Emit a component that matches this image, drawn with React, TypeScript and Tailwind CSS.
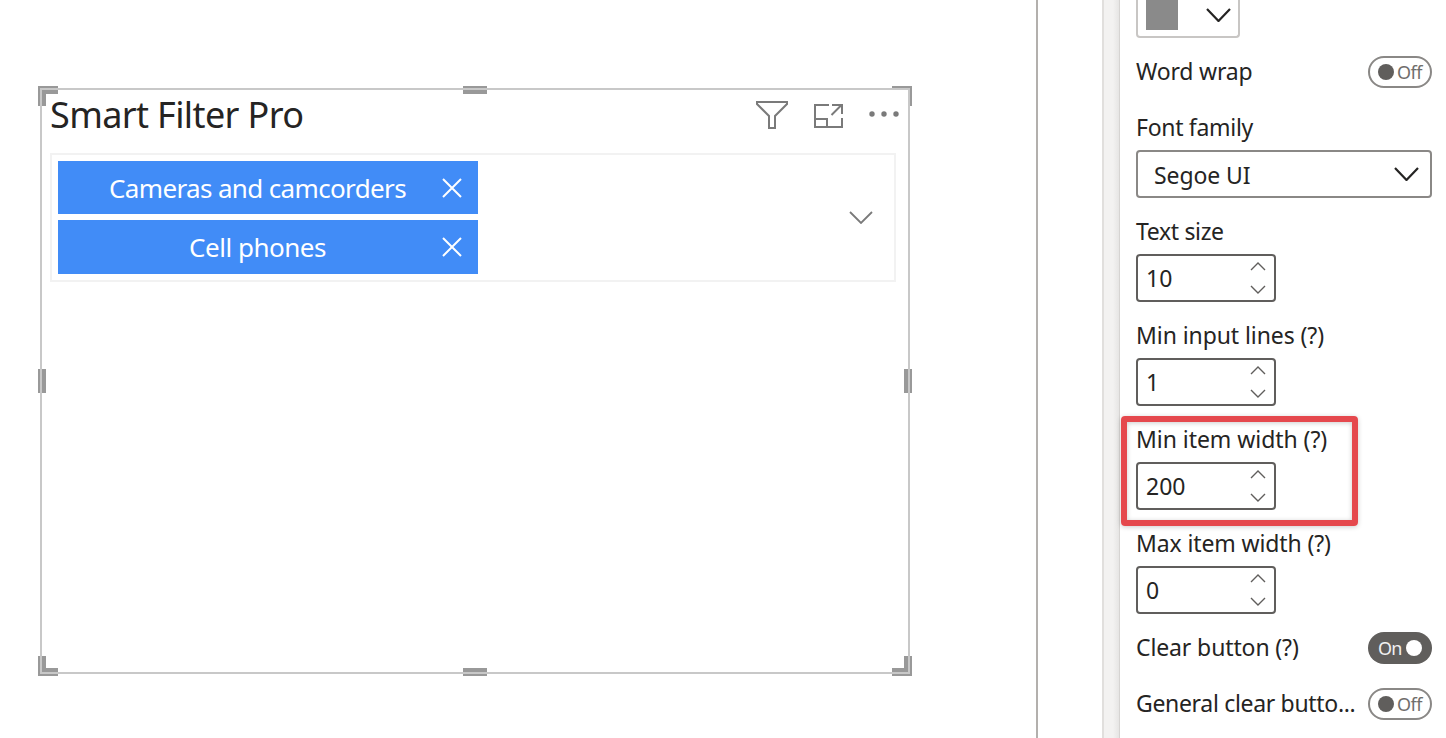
import React from "react";

function Chevron({ className, up = false, w, h, stroke }: { className?: string; up?: boolean; w: number; h: number; stroke: number }) {
  const d = up ? `M1 ${h - 1}L${w / 2} 1L${w - 1} ${h - 1}` : `M1 1L${w / 2} ${h - 1}L${w - 1} 1`;
  return (
    <svg className={className} width={w} height={h} viewBox={`0 0 ${w} ${h}`} fill="none" stroke="currentColor" strokeWidth={stroke}>
      <path d={d} />
    </svg>
  );
}

function Handle({ className }: { className: string }) {
  return <span className={`absolute bg-[#999999] ${className}`} />;
}

function Chip({ label, className }: { label: string; className: string }) {
  return (
    <div className={`flex w-[420px] items-center bg-[#418cf7] pr-4 text-white ${className}`}>
      <span className="flex-1 pl-[15px] text-center text-[26px] leading-8 whitespace-nowrap">{label}</span>
      <svg width="20" height="20" viewBox="0 0 20 20" fill="none" stroke="currentColor" strokeWidth="2">
        <path d="M1 1L19 19M19 1L1 19" />
      </svg>
    </div>
  );
}

function Toggle({ on = false }: { on?: boolean }) {
  return on ? (
    <div className="flex h-8 w-16 shrink-0 items-center justify-between rounded-full bg-[#605e5c] pr-[10px] pl-[10px] text-[18px] leading-8 text-[#f0f0f0]">
      <span className="tracking-[-0.7px]">On</span>
      <span className="size-4 rounded-full bg-white" />
    </div>
  ) : (
    <div className="flex h-8 w-16 shrink-0 items-center justify-between rounded-full border-2 border-[#8a8886] pr-2 pl-2 text-[18px] leading-7 text-[#706e6c]">
      <span className="size-4 rounded-full bg-[#605e5c]" />
      <span className="tracking-[-0.5px]">Off</span>
    </div>
  );
}

function Label({ children, className = "" }: { children: React.ReactNode; className?: string }) {
  return <div className={`h-8 text-[23px] leading-[30px] whitespace-nowrap ${className}`}>{children}</div>;
}

function NumberField({ label, value, track }: { label: string; value: string; track: string }) {
  return (
    <div className="mb-[18px]">
      <Label className={track}>{label}</Label>
      <div className="mt-1.5 flex h-12 w-[140px] items-center justify-between rounded-[4px] border-2 border-[#605e5c] bg-white pr-2 pl-2">
        <span className="text-[23px] leading-8">{value}</span>
        <span className="flex flex-col gap-3.5 text-[#605e5c]">
          <Chevron up w={16} h={9} stroke={1.4} />
          <Chevron w={16} h={9} stroke={1.4} />
        </span>
      </div>
    </div>
  );
}

export default function App() {
  return (
    <div className="flex h-[738px] w-[1446px] overflow-hidden bg-white font-['Noto_Sans',sans-serif] text-[#252423]">
      <main className="w-[1038px] shrink-0 border-r-2 border-[#b3b0ad] pt-[88px] pl-10">
        <section className="relative h-[586px] w-[870px]">
          <Handle className="-top-0.5 -left-0.5 h-2 w-5" />
          <Handle className="-top-0.5 -left-0.5 h-5 w-2" />
          <Handle className="-top-0.5 left-[423px] h-2 w-6" />
          <Handle className="-top-0.5 -right-0.5 h-0.5 w-5" />
          <Handle className="-top-0.5 -right-0.5 h-5 w-0.5" />
          <Handle className="top-[281px] -left-0.5 h-6 w-2" />
          <Handle className="top-[281px] -right-0.5 h-6 w-2" />
          <Handle className="-bottom-0.5 -left-0.5 h-2 w-5" />
          <Handle className="-bottom-0.5 -left-0.5 h-5 w-2" />
          <Handle className="-bottom-0.5 left-[423px] h-2 w-6" />
          <Handle className="-right-0.5 -bottom-0.5 h-2 w-5" />
          <Handle className="-right-0.5 -bottom-0.5 h-5 w-2" />
          <div className="relative h-full border-2 border-[#c8c8c8]">
            <header className="flex h-[63px] items-start pr-2 pl-2">
              <h1 className="flex-1 text-[36px] leading-[50px] tracking-[-0.62px] whitespace-nowrap">Smart Filter Pro</h1>
              <svg className="mt-[11px]" width="144" height="30" viewBox="0 0 144 30" fill="none" stroke="#7a7a7a" strokeWidth="2">
                <path d="M1 1H31V3L19 15V27H13V15L1 3Z" />
                <path d="M73 4H59V26H86V17M59 18H71V26M76 4H86V13M75.500 14L85.500 4" />
                <g fill="#7a7a7a" stroke="none">
                  <circle cx="116" cy="13" r="2.700" />
                  <circle cx="128" cy="13" r="2.700" />
                  <circle cx="140" cy="13" r="2.700" />
                </g>
              </svg>
            </header>
            <div className="ml-2 flex h-[129px] w-[846px] items-center justify-between border-2 border-[#f2f2f2] pr-[21px] pl-1.5">
              <div className="flex flex-col gap-1.5">
                <Chip label="Cameras and camcorders" className="h-[53px] tracking-[-0.64px]" />
                <Chip label="Cell phones" className="h-[54px] tracking-[-0.48px]" />
              </div>
              <Chevron className="text-[#7a7a7a]" w={24} h={13} stroke={1.800} />
            </div>
          </div>
        </section>
      </main>
      <div className="w-16 shrink-0" />
      <div className="w-[18px] shrink-0 border-r border-l-2 border-r-[#d6d4d2] border-l-[#e1dfdd] bg-linear-to-r from-[#f3f2f1] from-60% to-[#e6e5e4]" />
      <aside className="relative w-[326px] shrink-0 pr-[14px] pl-4">
        <div className="flex h-[38px] w-[104px] items-end justify-between rounded-b-[4px] border-2 border-t-0 border-[#c8c6c4] pr-[7px] pb-1.5 pl-2">
          <span className="h-[30px] w-8 bg-[#8a8a8a]" />
          <Chevron className="mb-2" w={25} h={14} stroke={2.200} />
        </div>
        <div className="mt-[18px] flex justify-between">
          <Label className="tracking-[-0.2px]">Word wrap</Label>
          <Toggle />
        </div>
        <Label className="mt-6 tracking-[-0.3px]">Font family</Label>
        <div className="mt-1.5 mb-[18px] flex h-12 items-center justify-between rounded-[4px] border-2 border-[#8a8886] pr-[11px] pl-4">
          <span className="mt-0.5 text-[23px] leading-8 tracking-[-0.1px]">Segoe UI</span>
          <Chevron w={25} h={14} stroke={2.200} />
        </div>
        <NumberField label="Text size" value="10" track="tracking-[-0.35px]" />
        <NumberField label="Min input lines (?)" value="1" track="tracking-[-0.08px]" />
        <NumberField label="Min item width (?)" value="200" track="tracking-[-0.05px]" />
        <NumberField label="Max item width (?)" value="0" track="tracking-[-0.12px]" />
        <div className="flex justify-between">
          <Label className="tracking-[-0.12px]">Clear button (?)</Label>
          <Toggle on />
        </div>
        <div className="mt-6 flex justify-between">
          <Label className="tracking-[-0.32px]">General clear butto...</Label>
          <Toggle />
        </div>
        <div className="absolute top-[416px] left-px h-[110px] w-[237px] rounded-[4px] border-[6px] border-[#e5484d] shadow-[0_1px_5px_rgba(0,0,0,0.2),inset_0_1px_5px_rgba(0,0,0,0.2)]" />
      </aside>
    </div>
  );
}
